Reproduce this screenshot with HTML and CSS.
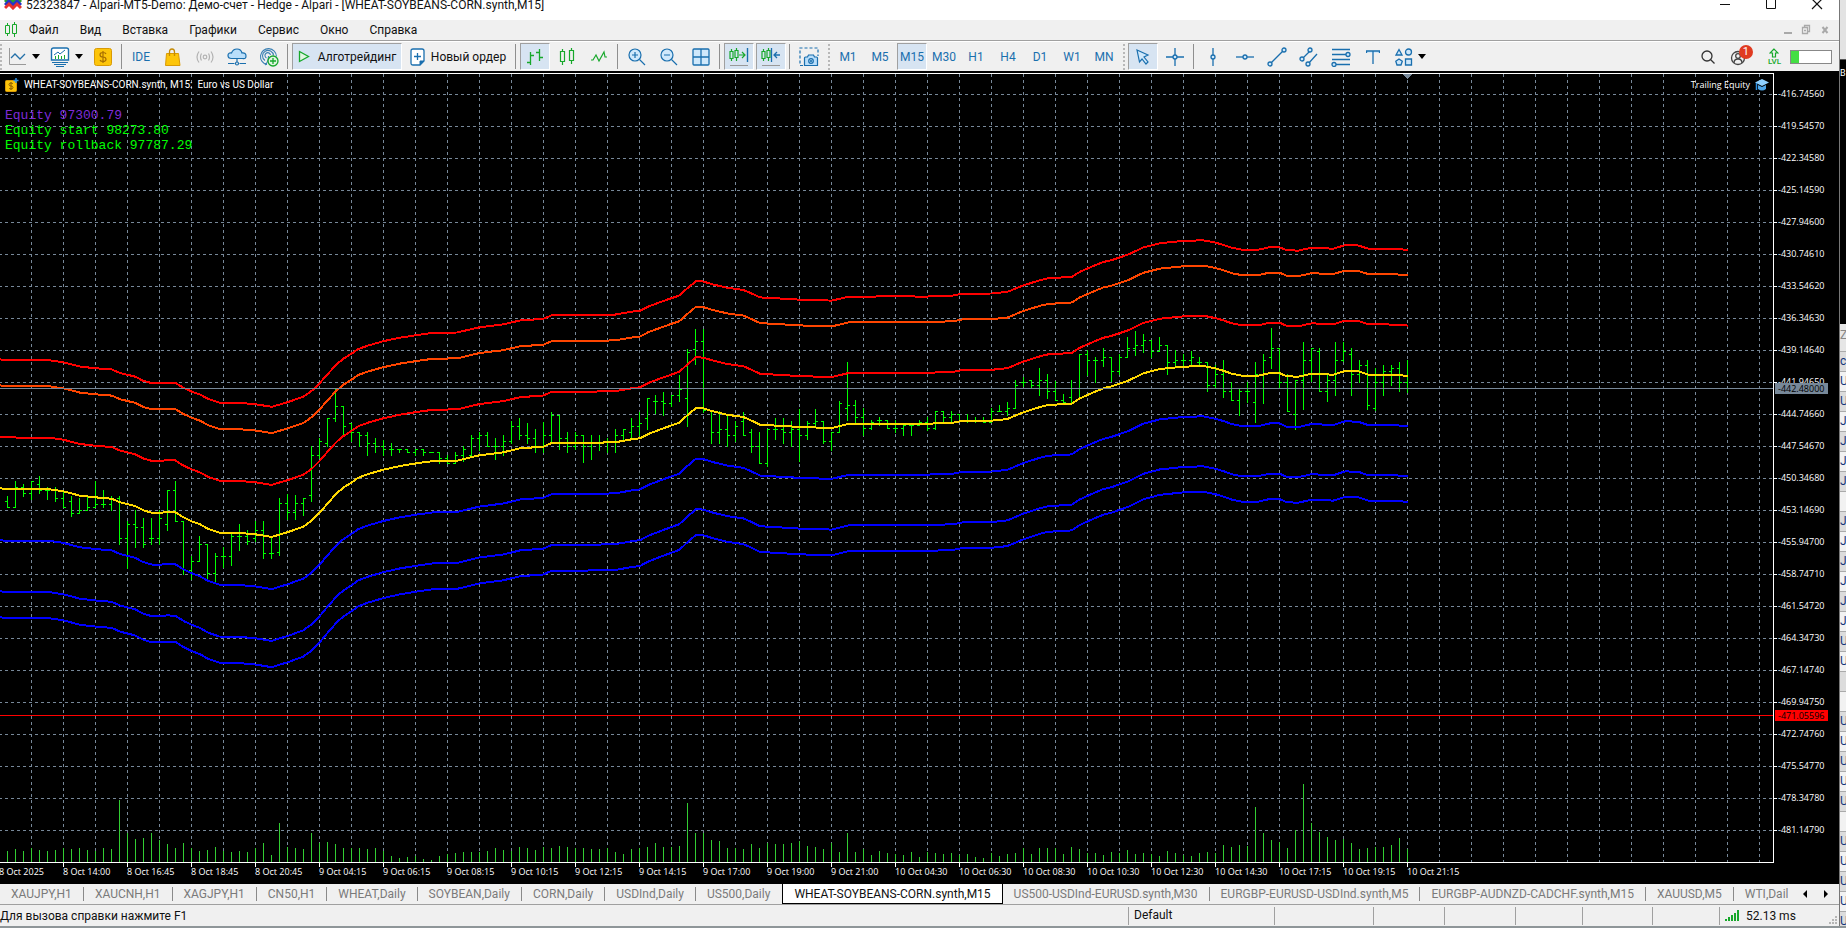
FILE: index.html
```
<!DOCTYPE html>
<html lang="ru">
<head>
<meta charset="utf-8">
<title>52323847 - Alpari-MT5-Demo</title>
<link rel="stylesheet" href="styles.css">
</head>
<body>
<div class="desktop">
<div class="window">
  <header class="titlebar">
    <svg class="app-icon" width="18" height="12" viewBox="0 0 18 12"><path d="M1 4l4-4 4 4 4-4 4 4" fill="none" stroke="#2aa12f" stroke-width="3"/><path d="M1 7l4-4 4 4 4-4 4 4" fill="none" stroke="#2636c8" stroke-width="3"/><path d="M1 10l4-4 4 4 4-4 4 4" fill="none" stroke="#e5322e" stroke-width="3"/></svg>
    <h1 class="title">52323847 - Alpari-MT5-Demo: Демо-счет - Hedge - Alpari - [WHEAT-SOYBEANS-CORN.synth,M15]</h1>
    <div class="window-controls">
      <button class="win-btn" aria-label="Свернуть"><svg width="12" height="12" viewBox="0 0 12 12"><path d="M1 6.500h10" stroke="#111"/></svg></button>
      <button class="win-btn" aria-label="Развернуть"><svg width="12" height="12" viewBox="0 0 12 12"><path d="M1.500 .5h9v10h-9z" fill="none" stroke="#111"/></svg></button>
      <button class="win-btn" aria-label="Закрыть"><svg width="12" height="12" viewBox="0 0 12 12"><path d="M1 1l10 10M11 1L1 11" stroke="#111" stroke-width="1.200"/></svg></button>
    </div>
  </header>

  <nav class="menubar">
    <svg class="menu-icon" width="12" height="16" viewBox="0 0 12 16" fill="none" stroke="#17a82b"><path d="M2.500 1v2M2.500 12v2M.5 3.500h4v8h-4zM9.500 0v2M9.500 12v3M7.500 2.500h4v9h-4z"/></svg>
    <button class="menu">Файл</button><button class="menu">Вид</button><button class="menu">Вставка</button><button class="menu">Графики</button><button class="menu">Сервис</button><button class="menu">Окно</button><button class="menu">Справка</button>
    <svg class="mdi" width="48" height="12" viewBox="0 0 48 12" fill="none" stroke="#a9a9a9"><path d="M0 9h8" stroke-width="2"/><path d="M18.500 3.500h5v6h-5zM20.500 3v-1.500h5v6h-2M20 6.500h2" stroke-width="1.300"/><path d="M38.500 3l5 6M43.500 3l-5 6" stroke-width="2"/></svg>
  </nav>

  <div class="toolbar">
    <span class="grip grip-first"></span>
    <button class="tool with-caret" aria-label="График"><svg width="18" height="18" viewBox="0 0 18 18" fill="none"><path d="M.5 0v16.500H17" stroke="#999"/><path d="M2 10l4-4 5 5 5-5" stroke="#2470a8" stroke-width="1.300"/></svg><i class="caret"></i></button>
    <button class="tool with-caret" aria-label="Шаблоны"><svg width="20" height="20" viewBox="0 0 20 20" fill="none" stroke="#1a6fae"><path d="M1.500 13V3q0-2 2-2h13q2 0 2 2v10z" stroke-width="1.400" fill="#fff"/><path d="M4 8l4-3 2 2 5-4"/><path d="M5.500 9v3M8.500 8v4M11.500 9v3M14.500 8v4" stroke="#17a82b"/><path d="M2 15.500h16M4 17.500h12M6 19.500h8"/></svg><i class="caret"></i></button>
    <button class="tool" aria-label="Счёт"><svg width="18" height="18" viewBox="0 0 18 18"><rect x=".5" y=".5" width="17" height="17" rx="2" fill="#fdc50a" stroke="#d99a05"/><path d="M12 6Q11.500 4.500 9 4.500 6 4.500 6 6.700 6 9 9 9T12 11.300Q12 13.500 9 13.500 6.500 13.500 6 12M9 3v12" fill="none" stroke="#a86f00" stroke-width="1.200"/></svg></button>
    <span class="sep"></span>
    <button class="tool">IDE</button>
    <button class="tool" aria-label="Маркет"><svg width="16" height="18" viewBox="0 0 16 18"><path d="M1.500 5.500h12l1.500 12H.5z" fill="#fdc50a" stroke="#d99a05"/><path d="M4.500 8V4Q4.500 1 7 1t2.500 3v4" fill="none" stroke="#c48a05" stroke-width="1.300"/></svg></button>
    <button class="tool" aria-label="Сигналы"><svg width="18" height="14" viewBox="0 0 18 14" fill="none" stroke="#b3b3b3" stroke-width="1.200"><circle cx="9" cy="7" r="1.800"/><path d="M5.500 3.500q-2 3.500 0 7M12.500 3.500q2 3.500 0 7M3 1.500q-4 5.500 0 11M15 1.500q4 5.500 0 11"/></svg></button>
    <button class="tool" aria-label="Облако"><svg width="20" height="18" viewBox="0 0 20 18" fill="none" stroke="#1a6fae" stroke-width="1.200"><path d="M4.500 10.500Q1 10.500 1 7.500T4.500 5Q6 1 10 1t5 4q4-.5 4 3t-3.500 2.500z" fill="#b9defa"/><path d="M10 11v3M1 15.500h6.500M12.500 15.500H19"/><circle cx="10" cy="15.500" r="1.500"/></svg></button>
    <button class="tool" aria-label="Хостинг"><svg width="20" height="20" viewBox="0 0 20 20" fill="none" stroke="#3c81b4" stroke-width="1.100"><path d="M8 17.500a8 8 0 1 1 9.500-8M6 13.500a5.500 5.500 0 1 1 8.500-5M7.500 11a2.800 2.800 0 1 1 4-3M9.500 9q0 6-3.500 9"/><circle cx="14" cy="14" r="5" fill="#dff5e0" stroke="#17a82b" stroke-width="1.300"/><path d="M14 11v6M11 14h6" stroke="#17a82b" stroke-width="1.300"/></svg></button>
    <span class="sep"></span>
    <button class="tool algo pressed"><svg width="12" height="13" viewBox="0 0 12 13"><path d="M1.500 1.500l9 5-9 5z" fill="#e2f6e2" stroke="#17a82b" stroke-width="1.300"/></svg>Алготрейдинг</button>
    <button class="tool order"><svg width="15" height="18" viewBox="0 0 15 18"><path d="M3 1h9q2 0 2 2v10l-4 4H3q-2 0-2-2V3q0-2 2-2z" fill="#fff" stroke="#1a6fae" stroke-width="1.300"/><path d="M10 17v-4h4z" fill="#1a6fae" stroke="#1a6fae"/><path d="M7.500 5v7M4 8.500h7" stroke="#1a6fae" stroke-width="1.300"/></svg>Новый ордер</button>
    <span class="sep"></span>
    <button class="tool pressed" aria-label="Бары"><svg width="18" height="18" viewBox="0 0 18 18" fill="none" stroke="#17a82b" stroke-width="1.300"><path d="M4.500 4v13M1 14.500h3.500M4.500 7.500H8M13.500 1v12M10 4.500h3.500M13.500 9.500H17"/></svg></button>
    <button class="tool" aria-label="Свечи"><svg width="16" height="18" viewBox="0 0 16 18" fill="none" stroke="#17a82b" stroke-width="1.200"><path d="M3.500 1v2M3.500 14v3M1.500 3.500h4v10h-4zM12.500 0v2M12.500 13v3M10.500 2.500h4v10h-4z"/></svg></button>
    <button class="tool" aria-label="Линия"><svg width="18" height="14" viewBox="0 0 18 14" fill="none" stroke="#17a82b" stroke-width="1.200"><path d="M1 10h2l3-5 3 6 5-9 1 5h2"/></svg></button>
    <span class="sep"></span>
    <button class="tool" aria-label="Увеличить"><svg width="18" height="18" viewBox="0 0 18 18" fill="none" stroke="#1a6fae" stroke-width="1.200"><circle cx="7" cy="7" r="6" fill="#cfe8fb"/><path d="M7 4v6M4 7h6M11.500 11.500L17 17"/></svg></button>
    <button class="tool" aria-label="Уменьшить"><svg width="18" height="18" viewBox="0 0 18 18" fill="none" stroke="#1a6fae" stroke-width="1.200"><circle cx="7" cy="7" r="6" fill="#cfe8fb"/><path d="M4 7h6M11.500 11.500L17 17"/></svg></button>
    <button class="tool" aria-label="Плитка"><svg width="18" height="18" viewBox="0 0 18 18" fill="#cfe8fb" stroke="#1a6fae" stroke-width="1.300"><rect x="1" y="1" width="16" height="16" rx="1"/><path d="M9 1v16M1 9h16"/></svg></button>
    <span class="sep"></span>
    <button class="tool pressed" aria-label="Автопрокрутка"><svg width="20" height="20" viewBox="0 0 20 20" fill="none" stroke="#17a82b"><path d="M2.500 2v2M2.500 12v2M1 4.500h3v7H1zM7.500 1v2M7.500 11v3M6 3.500h3v7H6zM10 8h6M13 5l3 3-3 3" stroke-width="1.200"/><path d="M18.500 1v14" stroke="#1a6fae" stroke-width="1.400"/><path d="M1 18.500h18" stroke="#999"/></svg></button>
    <button class="tool pressed" aria-label="Сдвиг графика"><svg width="20" height="20" viewBox="0 0 20 20" fill="none" stroke="#17a82b"><path d="M2.500 2v2M2.500 12v2M1 4.500h3v7H1zM7.500 1v2M7.500 11v3M6 3.500h3v7H6z" stroke-width="1.200"/><path d="M10.500 1v14M19 8h-6M16 5l-3 3 3 3" stroke="#1a6fae" stroke-width="1.300"/><path d="M1 18.500h18" stroke="#999"/></svg></button>
    <span class="sep"></span>
    <button class="tool" aria-label="Снимок"><svg width="20" height="20" viewBox="0 0 20 20" fill="none" stroke="#1a6fae" stroke-width="1.200"><path d="M4 18.500H1V1h18v8" stroke-dasharray="3 2"/><path d="M5.500 18.500V11q0-1 1-1h2l1-2h5l1 2h2q1 0 1 1v7.500z" fill="#b9defa"/><circle cx="12" cy="14" r="2.300"/><circle cx="12" cy="14" r=".5"/></svg></button>
    <span class="grip"></span>
    <button class="tool">M1</button><button class="tool">M5</button><button class="tool pressed">M15</button><button class="tool">M30</button><button class="tool">H1</button><button class="tool">H4</button><button class="tool">D1</button><button class="tool">W1</button><button class="tool">MN</button>
    <span class="grip"></span>
    <button class="tool pressed" aria-label="Курсор"><svg width="14" height="16" viewBox="0 0 14 16"><path d="M1 1l11 5-4 2 4 5-2 2-4-5-2.500 3z" fill="#cfe8fb" stroke="#1a6fae" stroke-width="1.200"/></svg></button>
    <button class="tool draw" aria-label="Перекрестие"><svg width="18" height="18" viewBox="0 0 18 18"><path d="M9 0v18M0 9h18"/><circle cx="9" cy="9" r="2"/></svg></button>
    <span class="sep"></span>
    <button class="tool draw" aria-label="Вертикальная линия"><svg width="18" height="18" viewBox="0 0 18 18"><path d="M9 0v18"/><circle cx="9" cy="9" r="2"/></svg></button>
    <button class="tool draw" aria-label="Горизонтальная линия"><svg width="18" height="18" viewBox="0 0 18 18"><path d="M0 9h18"/><circle cx="9" cy="9" r="2"/></svg></button>
    <button class="tool draw" aria-label="Трендовая линия"><svg width="20" height="20" viewBox="0 0 20 20"><path d="M3 17L17 3"/><circle cx="3" cy="17" r="2"/><circle cx="17" cy="3" r="2"/></svg></button>
    <button class="tool draw" aria-label="Канал"><svg width="20" height="20" viewBox="0 0 20 20"><path d="M3 12L12 3M9 17l9-10"/><circle cx="3" cy="12" r="2"/><circle cx="11" cy="3" r="2"/><circle cx="9" cy="17" r="2"/></svg></button>
    <button class="tool draw" aria-label="Фибоначчи"><svg width="20" height="20" viewBox="0 0 20 20"><path d="M1 2.500h18M1 7.500h14M1 12.500h18M5 17.500h14"/><circle cx="17" cy="7.500" r="2"/><circle cx="3" cy="17.500" r="2"/></svg></button>
    <button class="tool draw" aria-label="Текст"><svg width="14" height="14" viewBox="0 0 14 14"><path d="M.5 3V1h13v2M7 1v13"/></svg></button>
    <button class="tool draw with-caret" aria-label="Фигуры"><svg width="18" height="18" viewBox="0 0 18 18"><path d="M4 1.500l3 5.500H1z"/><circle cx="13.500" cy="4" r="3"/><path d="M4 11l3.300 2.300L6 17H2L.8 13.300zM10.500 11h6v6h-6z"/></svg><i class="caret"></i></button>
    <div class="status-tools">
      <button class="mini" aria-label="Поиск"><svg width="14" height="14" viewBox="0 0 14 14" fill="none" stroke="#333" stroke-width="1.300"><circle cx="6" cy="6" r="5"/><path d="M9.500 9.500l4 4"/></svg></button>
      <button class="mini" aria-label="Уведомления"><svg width="23" height="20" viewBox="0 0 23 20" fill="none" stroke="#444" stroke-width="1.300"><circle cx="8" cy="11" r="6.500"/><circle cx="8" cy="9" r="2.300"/><path d="M4 16q0-4 4-4t4 4"/></svg><span class="badge">1</span></button>
      <div class="lvl"><svg width="10" height="10" viewBox="0 0 10 10" fill="none" stroke="#17a82b" stroke-width="1.200"><path d="M5 1L1 5h2.500v4h3V5H9z"/></svg>LVL</div>
      <meter class="battery" min="0" max="100" value="20" aria-label="Уровень"></meter>
    </div>
  </div>

  <main class="chart">
    <section class="plot">
      <svg class="canvas" id="canvas" width="100%" height="100%"></svg>
      <div class="caption">
        <svg width="14" height="14" viewBox="0 0 14 14"><rect x=".5" y="2.500" width="11" height="11" rx="1" fill="#fdc50a" stroke="#d99a05"/><path d="M8 6Q7.500 5 6 5 4 5 4 6.500T6 8t2 1.500T6 11q-1.500 0-2-1M6 4v8" fill="none" stroke="#8a5c00"/><path d="M11 0v5M8.500 2.500h5" stroke="#2f8fe0" stroke-width="1.500"/></svg>
        <span>WHEAT-SOYBEANS-CORN.synth, M15:&nbsp; Euro vs US Dollar</span>
        <span class="expert">Trailing Equity</span>
        <svg width="14" height="12" viewBox="0 0 14 12"><path d="M7 0l7 3.500L7 7 0 3.500z" fill="#8fd0ff"/><path d="M3 6v4q4 3 8 0V6L7 8z" fill="#4da6ea"/><path d="M1.500 4v7" stroke="#2f8fe0" stroke-width="1.500"/></svg>
      </div>
      <div class="equity"><p class="equity-now">Equity 97300.79</p><p>Equity start 98273.80</p><p>Equity rollback 97787.29</p></div>
    </section>
    <aside class="prices" id="prices"><span class="tag tag-bid">-442.48000</span><span class="tag tag-stop">-471.05596</span></aside>
    <footer class="times" id="times"></footer>
  </main>

  <nav class="tabs">
    <div class="tab-list">
      <button class="tab">XAUJPY,H1</button><button class="tab">XAUCNH,H1</button><button class="tab">XAGJPY,H1</button><button class="tab">CN50,H1</button><button class="tab">WHEAT,Daily</button><button class="tab">SOYBEAN,Daily</button><button class="tab">CORN,Daily</button><button class="tab">USDInd,Daily</button><button class="tab last">US500,Daily</button><button class="tab active">WHEAT-SOYBEANS-CORN.synth,M15</button><button class="tab">US500-USDInd-EURUSD.synth,M30</button><button class="tab">EURGBP-EURUSD-USDInd.synth,M5</button><button class="tab">EURGBP-AUDNZD-CADCHF.synth,M15</button><button class="tab">XAUUSD,M5</button><button class="tab last">WTI,Dail</button>
    </div>
    <button class="scroll" aria-label="Назад"><svg width="5" height="8" viewBox="0 0 5 8"><path d="M4 0v8L0 4z"/></svg></button>
    <button class="scroll" aria-label="Вперёд"><svg width="5" height="8" viewBox="0 0 5 8"><path d="M1 0v8l4-4z"/></svg></button>
  </nav>

  <footer class="statusbar">
    <span>Для вызова справки нажмите F1</span><span class="cell">Default</span><span class="cell"></span><span class="cell"></span><span class="cell"></span><span class="cell"></span><span class="cell"></span><span class="cell"></span>
    <span class="cell ping"><svg width="15" height="11" viewBox="0 0 15 11" stroke="#17a82b" stroke-width="2"><path d="M1 11V9M4 11V7M7 11V5M10 11V3M13 11V0"/></svg>52.13 ms<svg class="resize" width="9" height="9" viewBox="0 0 9 9" fill="#b5b5b5"><path d="M6 0h2v2H6zM3 3h2v2H3zM6 3h2v2H6zM0 6h2v2H0zM3 6h2v2H3zM6 6h2v2H6z"/></svg></span>
  </footer>
</div>
<aside class="behind" id="behind"></aside>
<div class="below"></div>
</div>
<script src="chart.js"></script>
</body>
</html>
```
FILE: styles.css
```
* { box-sizing: border-box; }
body { margin: 0; font: 12px/16px Roboto, "Open Sans", sans-serif; color: #111; }
button { margin: 0; padding: 0; border: 0; background: none; font: inherit; color: inherit; white-space: nowrap; }
p { margin: 0; }
svg { flex: none; display: block; }

.desktop { display: grid; grid-template: minmax(0, 1fr) 2px / minmax(0, 1fr) 7px; height: 100vh; overflow: hidden; }
.window { display: flex; flex-direction: column; min-width: 0; background: #f0f0f0; }

.titlebar { display: flex; align-items: flex-start; height: 20px; padding: 0 16px 0 4px; gap: 4px; background: #fff; overflow: hidden; }
.app-icon { margin-top: -2px; }
.title { margin: -3px auto 0 0; font-size: 12px; font-weight: 400; line-height: 16px; white-space: nowrap; }
.window-controls { display: flex; gap: 34px; }
.win-btn { width: 12px; margin-top: -2px; }

.menubar { display: flex; align-items: center; height: 21px; padding: 0 7px 0 5px; gap: 1px; border-bottom: 1px solid #a0a0a0; }
.menu { padding: 0 10px; }
.menu-icon { margin-right: 1px; }
.mdi { margin-left: auto; }

.toolbar { display: flex; align-items: center; gap: 2px; height: 30px; border-top: 1px solid #fff; color: #1a6fae; }
.tool { display: flex; align-items: center; justify-content: center; flex: none; width: 30px; height: 27px; border: 1px solid transparent; }
.pressed { background: #d7e4f2; border-color: #a0a0a0 #fff #fff #a0a0a0; }
.with-caret { width: 40px; gap: 5px; }
.caret { width: 0; border: 4px solid transparent; border-top: 5px solid #000; border-bottom: 0; }
.algo, .order { gap: 8px; width: 110px; color: #111; }
.order { width: 108px; gap: 6px; }
.sep { width: 1px; height: 25px; margin: 0 2px 0 1px; background: #8f8f8f; }
.grip { width: 2px; height: 26px; margin: 0 1px 0 2px; background: repeating-linear-gradient(#b8b8b8 0 2px, transparent 2px 4px); }
.grip-first { margin: 0; }
.draw svg { fill: #cfe8fb; stroke: #1a6fae; stroke-width: 1.3; }
.status-tools { display: flex; align-items: center; gap: 15px; margin-left: auto; padding-right: 7px; }
.mini { position: relative; }
.badge { position: absolute; right: 0; top: -2px; width: 14px; height: 14px; border-radius: 50%; background: #e03a20; color: #fff; font-size: 11px; line-height: 14px; }
.lvl { display: flex; flex-direction: column; align-items: center; font-size: 8px; line-height: 8px; font-weight: 500; color: #17a82b; }
.battery { appearance: none; width: 42px; height: 14px; margin-left: -6px; border: 1px solid #888; background: linear-gradient(90deg, #43de43 20%, #fff 20%); }
.battery::-webkit-meter-inner-element, .battery::-webkit-meter-bar { display: none; }

.chart { flex: 1; min-height: 0; display: grid; grid-template: minmax(0, 1fr) 21px / minmax(0, 1fr) 65px; padding-top: 2px; background: #000; color: #fff; font: 9px/12px "Open Sans", sans-serif; overflow: hidden; }
.plot { position: relative; border: 1px solid #fff; border-left: 0; overflow: hidden; }
.canvas { position: absolute; inset: 0; shape-rendering: crispEdges; }
.caption { position: relative; display: flex; align-items: center; gap: 5px; padding: 3px 4px 0 5px; font: 10px/16px Roboto, sans-serif; }
.expert { margin-left: auto; font: 9px/16px "Open Sans", sans-serif; }
.equity { position: relative; margin-top: 15px; padding-left: 5px; font: 13px/15px "Liberation Mono", monospace; color: #0f0; }
.equity-now { color: #7f2bd8; }
.prices { position: relative; padding-top: 5px; }
.price { display: flex; align-items: center; gap: 1px; height: 32px; line-height: 32px; }
.price::before { content: ""; width: 3px; height: 1px; background: #fff; }
.tag { position: absolute; left: 1px; width: 53px; height: 11px; padding-left: 3px; line-height: 11px; color: #000; }
.tag-bid { top: 310px; background: #778899; }
.tag-stop { top: 637px; background: #f00; }
.times { grid-column: 1 / 3; display: flex; margin-left: -1px; line-height: 10px; }
.time { flex: none; width: 64px; white-space: nowrap; }
.time::before { content: ""; display: block; width: 1px; height: 4px; background: #fff; }

.tabs { display: flex; align-items: center; height: 21px; padding-right: 11px; gap: 15px; border-bottom: 1px solid #a0a0a0; color: #7a7a7a; }
.tab-list { flex: 1; min-width: 0; display: flex; align-items: center; overflow: hidden; height: 20px; }
.tab { flex: none; height: 14px; padding: 0 11px; line-height: 14px; border-right: 1px solid #8a8a8a; }
.last { border-color: transparent; }
.active { height: 20px; align-self: flex-start; background: #fff; color: #111; border: 1px solid #000; border-top: 0; line-height: 18px; }

.statusbar { display: grid; grid-template-columns: minmax(0, 1fr) 146px 99px 71px 71px 67px 70px 67px 120px; align-items: center; height: 21px; }
.cell { height: 18px; padding-left: 5px; border-left: 1px solid #a0a0a0; }
.ping { display: flex; align-items: center; gap: 6px; }
.resize { align-self: flex-end; margin: 0 1px 0 auto; }

.behind { display: flex; flex-direction: column; overflow: hidden; background: #000; border-left: 1px solid #777; font-size: 12px; color: #14357a; }
.behind-top { flex: none; height: 60px; background: #e3e3e3; border-bottom: 1px solid #555; }
.behind-chart { flex: none; height: 264px; padding-top: 5px; color: #fff; font-size: 9px; }
.behind-head { flex: none; height: 28px; line-height: 22px; background: #e6e6e6; color: #888; border-bottom: 1px solid #aaa; }
.behind-row { flex: none; height: 20px; line-height: 19px; border-bottom: 1px solid #aaa; background: #f2f2f2; overflow: hidden; }
.behind-row:nth-child(even) { background: #dcdcdc; }
.below { grid-column: 1 / 3; background: #8f9699; }
```
FILE: chart.js
```
const NS = 'http://www.w3.org/2000/svg';
const canvas = document.getElementById('canvas');
const TOP = 74;      // page row of the plot's first pixel line
const BASE = 862;    // page row of the plot's bottom border
const scene = document.createElementNS(NS, 'g');
scene.setAttribute('transform', `translate(0 ${-TOP})`);
canvas.append(scene);

function path(d, stroke, extra = {}) {
  const p = document.createElementNS(NS, 'path');
  p.setAttribute('d', d);
  p.setAttribute('stroke', stroke);
  p.setAttribute('fill', 'none');
  for (const k in extra) p.setAttribute(k, extra[k]);
  scene.append(p);
}

// Grid
let grid = '';
for (let x = 31; x < 4000; x += 32) grid += `M${x}.5 ${TOP}V${BASE}`;
for (let y = 94; y < BASE; y += 32) grid += `M-1 ${y}.5H4000`;
path(grid, '#778899', { 'stroke-dasharray': '3 3' });

// Volumes, one per bar, in pixels
const volumeTops = [213,207,213,205,210,213,210,204,207,204,210,213,204,207,60,159,178,174,159,180,192,204,189,205,213,210,201,213,216,213,216,205,189,225,129,202,204,207,159,189,186,192,204,205,204,207,204,213,228,234,231,230,237,240,228,222,219,216,216,216,213,204,210,213,201,204,210,202,204,198,201,205,204,207,207,204,216,222,207,205,201,189,201,202,198,69,159,159,180,183,204,205,207,192,204,190,192,192,189,185,198,201,207,190,216,159,216,207,225,213,219,222,225,216,231,216,219,222,219,225,222,231,234,220,228,222,219,206,222,204,204,206,222,201,207,220,219,225,216,220,210,222,219,222,228,213,219,225,228,219,216,220,195,201,195,198,81,159,180,186,204,152,12,129,156,171,180,178,189,207,204,202,201,195,174,208];
path(volumeTops.map((t, i) => `M${i * 8 + 7}.5 ${BASE}v${-Math.round((247 - t) / 3)}`).join(''), '#32cd32');

// Price bars: high, low, open, close; in thirds of a pixel below each block's origin
const blocks = [
  [320, `528,563,544,562 484,563,562,503 492,530,503,520 485,537,520,485 468,521,493,511 502,537,511,511 502,545,508,535 512,562,535,562 528,590,544,580 534,581,580,571 532,572,571,562 484,562,562,553 510,563,553,553 528,572,553,535 528,674,535,655 604,744,655,613 571,683,613,622 594,683,622,673 594,674,655,655 571,674,655,595 511,632,613,511 484,605,511,604 604,762,604,751 709,778,751,724 648,725,724,673 673,777,673,760 700,785,760,709 682,743,709,709 640,735,709,649 613,692,649,649 631,673,649,664 604,664,655,631 604,716,631,700 652,716,700,700 534,707,697,550 524,598,550,577 525,597,577,550 535,587,550,535 378,545,526,406 355,415,406,364 295,380,370,295 208,305,295,259 259,345,259,319 310,364,310,337 337,380,337,346 337,407,346,370 355,398,370,379 361,407,379,388 370,407,388,388 388,398,388,388 388,398,388,397 388,407,397,388 388,407,388,397 397,398,397,397 397,431,397,415 407,431,415,430 397,431,430,406`],
  [260, `560,605,586,568 525,587,586,535 517,570,535,526 517,560,526,559 534,597,559,559 525,587,559,544 484,550,544,499 474,537,499,526 489,551,526,535 507,578,535,560 487,578,560,526 457,546,526,466 466,569,466,535 517,578,535,560 517,569,560,526 526,606,526,560 525,597,560,547 525,570,547,547 535,578,547,547 508,578,547,526 508,537,526,508 475,535,517,499 456,526,499,490 415,509,475,415 405,459,424,424 397,467,424,430 406,440,430,406 346,425,406,388 267,500,415,277 208,312,268,244 208,457,244,450 450,551,450,517 455,551,517,508 465,560,508,526 484,545,526,499 457,527,484,526 508,578,517,559 517,610,559,610 508,620,610,508 474,537,508,508 475,551,508,517 484,560,517,508 448,605,508,526 484,537,526,490 448,500,490,484 484,551,484,544 517,570,544,517 423,518,517,430 307,480,445,436 421,490,436,472 445,525,472,505 481,507,505,487 472,497,481,481 481,506,481,505 481,516,505,505 495,525,505,497 495,525,497,495 481,497,495,487 472,510,487,505 455,507,505,455`],
  [220, `574,603,574,592 574,605,592,583 583,605,583,600 583,608,600,600 592,608,600,604 592,607,604,607 565,608,607,574 556,575,574,574 547,585,574,565 481,566,565,496 472,500,487,487 481,505,481,496 445,525,496,481 462,534,481,514 484,542,514,541 523,551,541,548 481,550,532,505 403,535,505,403 391,467,403,421 411,488,421,421 385,438,421,412 412,483,412,454 403,462,454,412 352,413,412,385 334,405,385,376 343,396,376,361 361,413,361,394 352,395,394,376 376,464,376,427 392,440,427,421 403,440,421,421 393,437,421,412 412,436,427,427 427,515,427,496 436,505,496,463 421,533,463,514 487,542,514,541 505,585,541,514 487,548,514,514 427,608,547,463 403,549,463,421 325,446,412,385 385,505,385,487 463,575,487,574 481,627,583,481 367,567,481,421 385,484,421,385 385,515,394,514 464,543,514,481 367,525,481,421 367,425,421,394 385,525,403,463 421,488,463,436 421,567,436,556 445,570,565,487 436,525,487,454 436,497,454,445 427,515,445,487 421,518,487,505`]
];
let bars = '', x = 7;
for (const [origin, text] of blocks) {
  for (const row of text.split(' ')) {
    const [h, l, o, c] = row.split(',').map(v => origin + Math.floor(v / 3));
    bars += `M${x}.5 ${h}V${l + 1}M${x - 2} ${o}.5h2M${x + 1} ${c}.5h2`;
    x += 8;
  }
}
path(bars, '#00ff00');

// Moving average and its envelope
const averageParts = [
  [0, 320, '0,504 10,507 150,508 190,514 240,527 285,532 335,536 360,547 405,558 430,571 455,578 485,578 500,576 526,577 550,592 575,604 600,613 625,627 658,638 718,639 766,643 815,651 835,645 862,637 910,620 935,602 960,577 985,548 1010,520 1030,503 1055,487 1075,473 1105,462 1150,449 1200,438 1250,430 1300,423 1370,422'],
  [460, 260, '0,600 58,586 130,577 180,565 250,560 275,549 345,549 465,547 515,538 540,535 565,522 610,505 658,488 682,466 708,444 730,445 755,453 800,464 850,471 875,482 900,494 970,498 1020,501 1115,504 1165,492 1280,491 1360,491'],
  [920, 220, '0,612 100,608 125,603 215,602 262,597 310,577 360,561 385,555 455,551 480,535 525,515 550,505 575,499 625,482 670,460 720,447 790,440 850,438 885,445 910,452 935,461 965,467 1015,467 1050,459 1078,459 1100,469 1135,470 1175,461 1240,464 1275,453 1315,454 1345,464 1435,465 1463,468']
];
const average = averageParts.flatMap(([ox, oy, text]) =>
  text.split(' ').map(p => p.split(',')).map(([px, py]) => [ox + px / 3, oy + py / 3]));
const levels = [[-1, '#ff0000'], [-0.798, '#ff4500'], [-0.4, '#ff0000'], [0, '#ffd700'], [0.4, '#0000ff'], [0.798, '#0000ff'], [1, '#0000ff']];
for (const [k, color] of levels) {
  const d = average.map(([px, py]) => `${px.toFixed(1)} ${(py + k * (126 + (py - 376) * 0.026)).toFixed(1)}`);
  path('M' + d.join('L'), color, { 'stroke-width': 2 });
}

// Price levels and shift marker
path('M0 388.5H4000', '#778899');
path('M0 715.5H4000', '#ff0000');
const marker = document.createElementNS(NS, 'path');
marker.setAttribute('d', 'M1402 74h11l-5.500 5z');
marker.setAttribute('fill', '#778899');
scene.append(marker);

// Axis labels
const prices = document.getElementById('prices');
for (let i = 0; i < 24; i++) {
  const el = document.createElement('div');
  el.className = 'price';
  el.textContent = (-416.7456 - i * 2.8001).toFixed(5);
  prices.insertBefore(el, prices.querySelector('.tag'));
}
const times = document.getElementById('times');
const days = [['8 Oct', '2025 14:00 16:45 18:45 20:45'], ['9 Oct', '04:15 06:15 08:15 10:15 12:15 14:15 17:00 19:00 21:00'], ['10 Oct', '04:30 06:30 08:30 10:30 12:30 14:30 17:15 19:15 21:15']];
for (const [day, list] of days) for (const t of list.split(' ')) {
  const el = document.createElement('span');
  el.className = 'time';
  el.textContent = `${day} ${t}`;
  times.append(el);
}

// Sliver of the window lying behind
const behind = document.getElementById('behind');
const add = (cls, text) => { const el = document.createElement('div'); el.className = cls; el.textContent = text; behind.append(el); };
add('behind-top', '');
add('behind-chart', 'B');
add('behind-head', 'Z');
for (const t of ['c', 'U', 'U', 'J', 'J', 'J', 'J', '', 'J', 'J', 'J', 'J', 'J', 'J', 'U', 'U', '', '', 'U', 'U', 'U', 'U', 'U', '', 'U', 'U', 'U', 'U', 'U']) add('behind-row', t);
```
